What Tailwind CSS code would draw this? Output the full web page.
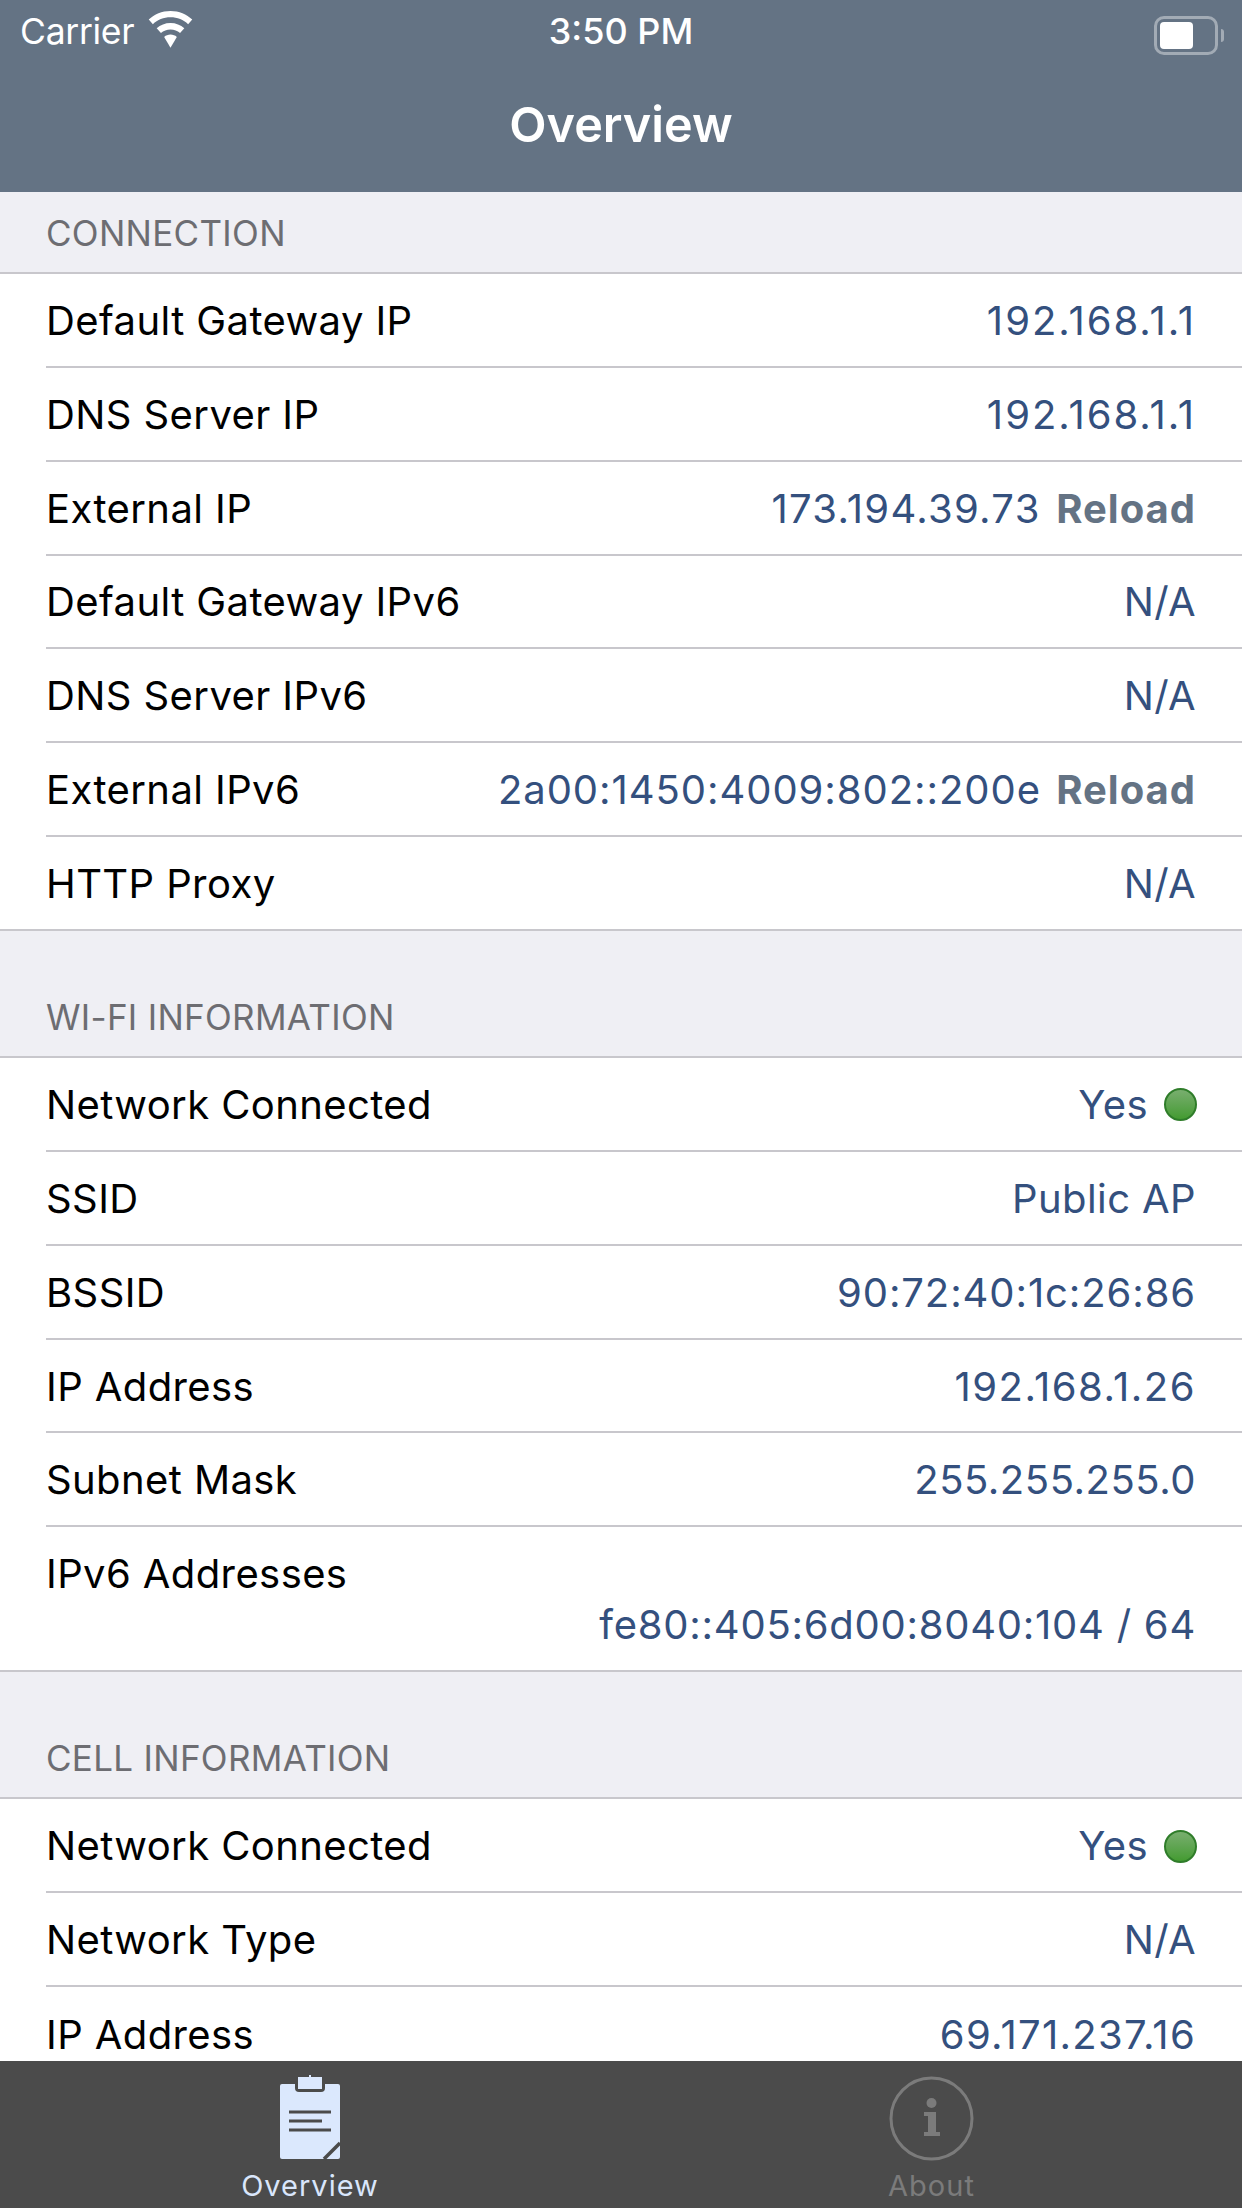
<!DOCTYPE html>
<html lang="en">
<head>
    <meta charset="UTF-8">
    <meta name="viewport" content="width=device-width, initial-scale=1.0">
    <title>Overview</title>
    <script src="https://cdn.jsdelivr.net/npm/@tailwindcss/browser@4"></script>
</head>
<body class="font-['Inter',sans-serif] bg-[#efeff4]">
<div class="flex flex-col w-[1242px] h-[2208px] overflow-hidden">

    <!-- Nav bar -->
    <header class="h-[192px] shrink-0 bg-[#647384] text-white flex flex-col">
        <div class="h-[62px] relative flex items-center justify-center">
            <div class="absolute left-[20px] top-[12px] flex items-center gap-[14px]">
                <span class="text-[35.5px] leading-[40px] tracking-[-0.3px]">Carrier</span>
                <svg class="w-[45px] h-[38px] -mt-[4px]" viewBox="0 0 39 33" fill="#fff"><path d="M19.5 0C12 0 5.5 2.8.6 7.4l3.600 4C8.200 7.700 13.500 5.500 19.500 5.500s11.300 2.200 15.300 5.900l3.600-4C33.500 2.800 27 0 19.500 0z"/><path d="M19.500 10.500c-4.600 0-8.800 1.700-12 4.500l3.700 4.100c2.200-1.900 5.100-3.100 8.300-3.100s6.100 1.200 8.300 3.100l3.700-4.100c-3.200-2.800-7.400-4.500-12-4.500z"/><path d="M19.500 20.500c-2.100 0-4 .8-5.500 2l5.500 9.500 5.500-9.500c-1.500-1.200-3.400-2-5.500-2z"/></svg>
            </div>
            <span class="text-[36px] leading-[40px] font-medium">3:50 PM</span>
            <div class="absolute left-[1154px] top-[16px] flex items-center">
                <div class="w-[64px] h-[39px] rounded-[10px] border-[3px] border-white/40 p-[3px]">
                    <div class="w-[33px] h-full rounded-[4px] bg-white"></div>
                </div>
                <div class="w-[3px] h-[13px] ml-[3px] rounded-r-full bg-white/40"></div>
            </div>
        </div>
        <div class="flex-1 flex items-center justify-center pb-[4px]">
            <h1 class="text-[48.5px] leading-[56px] font-semibold">Overview</h1>
        </div>
    </header>

    <!-- Table -->
    <main class="flex-1 overflow-hidden text-[40px] leading-[48px] text-black tracking-[0.4px]">
        <h2 class="h-[82px] pl-[46px] pt-[19px] text-[35px] leading-[44px] text-[#6d6d72] tracking-[0.3px] border-b-2 border-[#c8c7cc]">CONNECTION</h2>
        <div class="bg-white border-b-2 border-[#c8c7cc]">
            <div class="ml-[46px] pr-[46px] pt-[2px] h-[93.85px] flex items-center justify-between border-b-2 border-[#c8c7cc]"><span>Default Gateway IP</span><span class="tracking-[2px] text-[#34507e]">192.168.1.1</span></div>
            <div class="ml-[46px] pr-[46px] pt-[2px] h-[93.85px] flex items-center justify-between border-b-2 border-[#c8c7cc]"><span>DNS Server IP</span><span class="tracking-[2px] text-[#34507e]">192.168.1.1</span></div>
            <div class="ml-[46px] pr-[46px] pt-[2px] h-[93.85px] flex items-center justify-between border-b-2 border-[#c8c7cc]"><span>External IP</span><span class="tracking-[1.3px] text-[#34507e]">173.194.39.73 <b class="ml-[3px] font-bold tracking-[1px] text-[#647384]">Reload</b></span></div>
            <div class="ml-[46px] pr-[46px] pt-[2px] h-[93.85px] flex items-center justify-between border-b-2 border-[#c8c7cc]"><span>Default Gateway IPv6</span><span class="text-[#34507e]">N/A</span></div>
            <div class="ml-[46px] pr-[46px] pt-[2px] h-[93.85px] flex items-center justify-between border-b-2 border-[#c8c7cc]"><span>DNS Server IPv6</span><span class="text-[#34507e]">N/A</span></div>
            <div class="ml-[46px] pr-[46px] pt-[2px] h-[93.85px] flex items-center justify-between border-b-2 border-[#c8c7cc]"><span>External IPv6</span><span class="tracking-[0.95px] text-[#34507e]">2a00:1450:4009:802::200e <b class="ml-[3px] font-bold tracking-[1px] text-[#647384]">Reload</b></span></div>
            <div class="ml-[46px] pr-[46px] pt-[2px] h-[92px] flex items-center justify-between"><span>HTTP Proxy</span><span class="text-[#34507e]">N/A</span></div>
        </div>

        <h2 class="h-[127px] pl-[46px] pt-[64px] text-[35px] leading-[44px] text-[#6d6d72] tracking-[0.3px] border-b-2 border-[#c8c7cc]">WI-FI INFORMATION</h2>
        <div class="bg-white border-b-2 border-[#c8c7cc]">
            <div class="ml-[46px] pr-[45px] pt-[2px] h-[93.85px] flex items-center justify-between border-b-2 border-[#c8c7cc]"><span>Network Connected</span><span class="flex items-center gap-[16px] text-[#34507e]">Yes <i class="block w-[33px] h-[33px] rounded-full border-2 border-[#2f7d2a] bg-gradient-to-b from-[#78ae6e] to-[#439b30]"></i></span></div>
            <div class="ml-[46px] pr-[46px] pt-[2px] h-[93.85px] flex items-center justify-between border-b-2 border-[#c8c7cc]"><span>SSID</span><span class="text-[#34507e]">Public AP</span></div>
            <div class="ml-[46px] pr-[46px] pt-[2px] h-[93.85px] flex items-center justify-between border-b-2 border-[#c8c7cc]"><span>BSSID</span><span class="tracking-[0.9px] text-[#34507e]">90:72:40:1c:26:86</span></div>
            <div class="ml-[46px] pr-[46px] pt-[2px] h-[93.85px] flex items-center justify-between border-b-2 border-[#c8c7cc]"><span>IP Address</span><span class="tracking-[1.5px] text-[#34507e]">192.168.1.26</span></div>
            <div class="ml-[46px] pr-[46px] pt-[2px] h-[93.85px] flex items-center justify-between border-b-2 border-[#c8c7cc]"><span>Subnet Mask</span><span class="tracking-[0.55px] text-[#34507e]">255.255.255.0</span></div>
            <div class="ml-[46px] pr-[46px] h-[143px] pt-[23px] flex flex-col"><span>IPv6 Addresses</span><span class="self-end mt-[3px] tracking-[0.75px] text-[#34507e]">fe80::405:6d00:8040:104 / 64</span></div>
        </div>

        <h2 class="h-[127px] pl-[46px] pt-[64px] text-[35px] leading-[44px] text-[#6d6d72] tracking-[0.3px] border-b-2 border-[#c8c7cc]">CELL INFORMATION</h2>
        <div class="bg-white">
            <div class="ml-[46px] pr-[45px] pt-[2px] h-[93.85px] flex items-center justify-between border-b-2 border-[#c8c7cc]"><span>Network Connected</span><span class="flex items-center gap-[16px] text-[#34507e]">Yes <i class="block w-[33px] h-[33px] rounded-full border-2 border-[#2f7d2a] bg-gradient-to-b from-[#78ae6e] to-[#439b30]"></i></span></div>
            <div class="ml-[46px] pr-[46px] pt-[2px] h-[93.85px] flex items-center justify-between border-b-2 border-[#c8c7cc]"><span>Network Type</span><span class="text-[#34507e]">N/A</span></div>
            <div class="ml-[46px] pr-[46px] pt-[2px] h-[93.85px] flex items-center justify-between"><span>IP Address</span><span class="tracking-[1.3px] text-[#34507e]">69.171.237.16</span></div>
        </div>
    </main>

    <!-- Tab bar -->
    <nav class="h-[147px] shrink-0 bg-[#4b4b4b] grid grid-cols-2 text-[29px] leading-[32px]">
        <div class="flex flex-col items-center pt-[14px] -ml-[1px] text-[#d9e6fb]">
            <svg class="w-[60px] h-[86px]" viewBox="0 0 60 86" fill="none">
                <rect x="0" y="9" width="60" height="75" rx="2" fill="#dbe8fd"/>
                <path d="M15 9v4a4 4 0 0 0 4 4h22a4 4 0 0 0 4-4V9" fill="#4b4b4b"/>
                <rect x="18" y="2" width="24" height="12" fill="#dbe8fd"/>
                <rect x="29" y="0" width="2" height="3" fill="#dbe8fd"/>
                <path d="M9 37h42M9 46h33M9 55h42" stroke="#4b4b4b" stroke-width="3"/>
                <path d="M44 84l16-16" stroke="#4b4b4b" stroke-width="3.500"/>
            </svg>
            <span class="mt-[9px] tracking-[1px]">Overview</span>
        </div>
        <div class="flex flex-col items-center pt-[15px] text-[#7b7b7b]">
            <svg class="w-[85px] h-[85px]" viewBox="0 0 85 85" fill="none">
                <circle cx="42.500" cy="42.500" r="40.500" stroke="#7b7b7b" stroke-width="3"/>
                <circle cx="42.500" cy="27" r="5" fill="#7b7b7b"/>
                <path d="M35 36h12v20h4v4H35v-4h4V40h-4z" fill="#7b7b7b"/>
            </svg>
            <span class="mt-[9px] tracking-[1px]">About</span>
        </div>
    </nav>
</div>
</body>
</html>
